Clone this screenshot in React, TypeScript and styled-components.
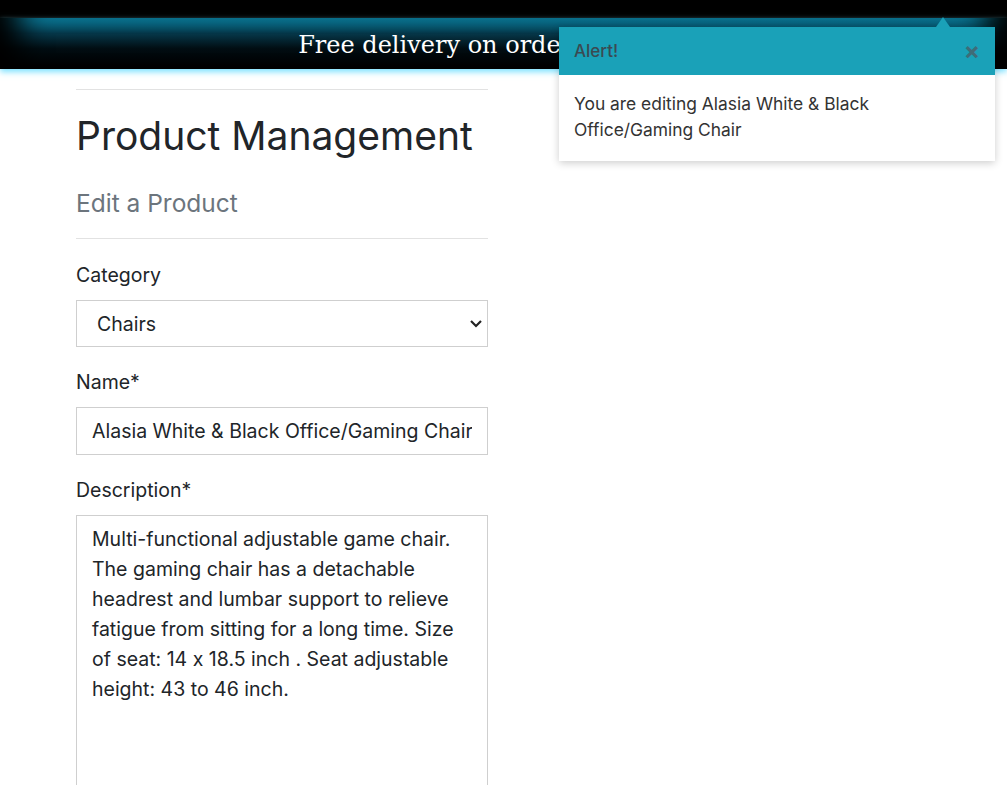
import React from "react";
import styled, { createGlobalStyle } from "styled-components";

const GlobalStyle = createGlobalStyle`
  * { box-sizing: border-box; }
  html, body { margin: 0; padding: 0; background: #fff; }
  body {
    font-family: Inter, "Noto Sans", sans-serif;
    font-feature-settings: "calt" 0;
    color: #212529;
    overflow: hidden;
  }
`;

const Header = styled.header`
  background: #000;
  padding-top: 18px;
`;

const Banner = styled.div`
  height: 51px;
  display: flex;
  align-items: center;
  justify-content: center;
  background: linear-gradient(to bottom, #0b85a6 0%, #06384a 30%, #010d12 60%, #000 100%);
  box-shadow: inset 40px 0 30px -20px #000, inset -40px 0 30px -20px #000,
    0 3px 6px #7fe2ff;
`;

const BannerText = styled.p`
  margin: 0;
  padding-top: 3px;
  font-family: "DejaVu Serif", serif;
  font-size: 24px;
  color: #fff;
`;

const Main = styled.main`
  width: 412px;
  margin-left: 76px;
  padding-top: 20px;
`;

const Rule = styled.hr`
  border: 0;
  border-top: 1px solid #e2e2e2;
  margin: 0;
`;

const Title = styled.h1`
  margin: 20px 0 0;
  font-size: 39px;
  font-weight: 400;
  line-height: 52px;
`;

const Subtitle = styled.h2`
  margin: 24px 0 18px;
  font-size: 24.5px;
  font-weight: 400;
  line-height: 34px;
  color: #6c757d;
`;

const Field = styled.div<{ $first?: boolean }>`
  display: flex;
  flex-direction: column;
  margin-top: ${(p) => (p.$first ? "22px" : "21px")};
`;

const Label = styled.label`
  font-size: 19.5px;
  line-height: 28px;
  margin-bottom: 11px;
`;

const SelectBox = styled.div`
  height: 47px;
  border: 1px solid #cfcfcf;
  display: flex;
  align-items: center;
  padding: 0 20px;
  font-size: 19.5px;
`;

const Chevron = styled.svg`
  margin-left: auto;
  margin-right: -16px;
`;

const TextInput = styled.input`
  height: 48px;
  border: 1px solid #cfcfcf;
  border-radius: 0;
  padding: 0 15px;
  font-family: inherit;
  font-feature-settings: "calt" 0;
  font-size: 19.5px;
  color: #212529;
  outline: none;
`;

const TextArea = styled.textarea`
  height: 300px;
  border: 1px solid #cfcfcf;
  border-radius: 0;
  padding: 8px 15px;
  font-family: inherit;
  font-feature-settings: "calt" 0;
  font-size: 19.5px;
  line-height: 30px;
  color: #212529;
  resize: none;
  outline: none;
`;

const Toast = styled.div`
  position: absolute;
  top: 27px;
  left: 559px;
  width: 436px;
  background: #fff;
  box-shadow: 0 2px 8px rgba(0, 0, 0, 0.2);
  &::before {
    content: "";
    position: absolute;
    top: -10px;
    left: 377px;
    border-left: 7px solid transparent;
    border-right: 7px solid transparent;
    border-bottom: 10px solid #1aa1b8;
  }
`;

const ToastHeader = styled.div`
  height: 48px;
  background: #1aa1b8;
  display: flex;
  align-items: center;
  padding: 0 15px;
  font-size: 17px;
  font-weight: 500;
  color: #3a4a52;
`;

const CloseButton = styled.span`
  margin-left: auto;
  font-size: 24px;
  line-height: 1;
  color: #3f6c78;
  font-weight: 700;
`;

const ToastBody = styled.div`
  padding: 16px 15px 18px;
  font-size: 17.4px;
  line-height: 26px;
  color: #333;
`;

export default function App() {
  return (
    <>
      <GlobalStyle />
      <Header>
        <Banner>
          <BannerText>Free delivery on orders over $50!</BannerText>
        </Banner>
      </Header>
      <Main>
        <Rule />
        <Title>Product Management</Title>
        <Subtitle>Edit a Product</Subtitle>
        <Rule />
        <Field $first>
          <Label>Category</Label>
          <SelectBox>
            Chairs
            <Chevron width="14" height="10" viewBox="0 0 14 10">
              <path d="M2 2l5 5 5-5" fill="none" stroke="#222" strokeWidth="2.2" />
            </Chevron>
          </SelectBox>
        </Field>
        <Field>
          <Label>Name*</Label>
          <TextInput readOnly value="Alasia White & Black Office/Gaming Chair" />
        </Field>
        <Field>
          <Label>Description*</Label>
          <TextArea
            readOnly
            value="Multi-functional adjustable game chair. The gaming chair has a detachable headrest and lumbar support to relieve fatigue from sitting for a long time. Size of seat: 14 x 18.5 inch . Seat adjustable height: 43 to 46 inch."
          />
        </Field>
      </Main>
      <Toast>
        <ToastHeader>
          Alert!
          <CloseButton>×</CloseButton>
        </ToastHeader>
        <ToastBody>You are editing Alasia White &amp; Black Office/Gaming Chair</ToastBody>
      </Toast>
    </>
  );
}
